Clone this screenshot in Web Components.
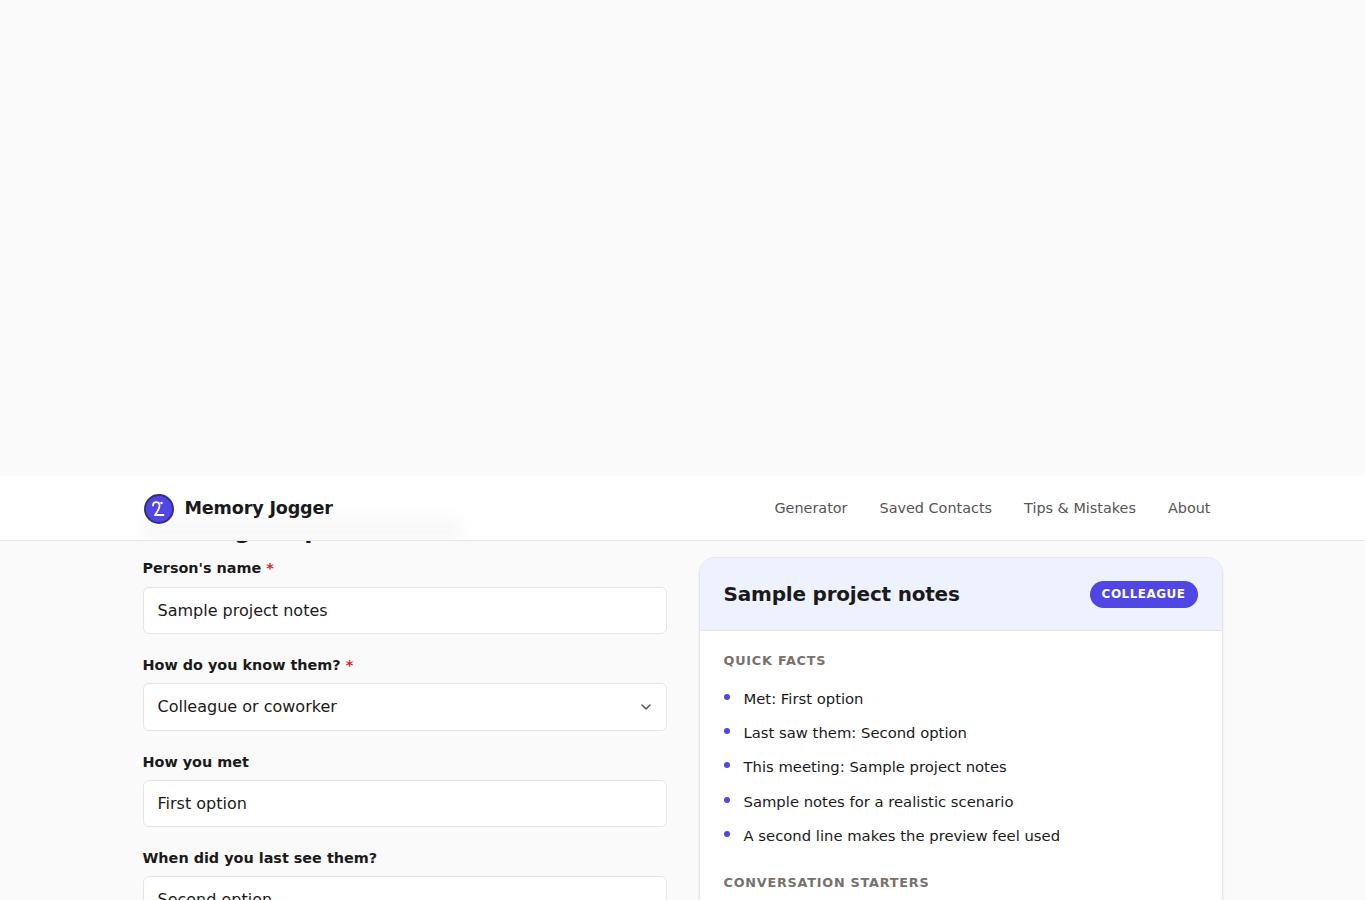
<!doctype html>
<html lang="en">
<head>
    <meta charset="utf-8">
    <title>Memory Jogger</title>
    <style>
        body {
            margin: 0;
            height: 900px;
            overflow: hidden;
            background: #fafafa;
            color: #1a1a1a;
            font-family: "DejaVu Sans", sans-serif;
            font-size: 16px;
            line-height: 1.6;
            --accent: #4f46e5;
            --line: #e5e5e5;
        }
    </style>
</head>
<body>
    <mj-header>
        <mj-link>Generator</mj-link>
        <mj-link>Saved Contacts</mj-link>
        <mj-link>Tips &amp; Mistakes</mj-link>
        <mj-link>About</mj-link>
    </mj-header>

    <mj-layout>
        <mj-form slot="form">
            <mj-field label="Person's name" required>Sample project notes</mj-field>
            <mj-field label="How do you know them?" required select>Colleague or coworker</mj-field>
            <mj-field label="How you met">First option</mj-field>
            <mj-field label="When did you last see them?">Second option</mj-field>
        </mj-form>
        <mj-card slot="card" name="Sample project notes" tag="Colleague">
            <mj-section heading="Quick facts">
                <mj-fact>Met: First option</mj-fact>
                <mj-fact>Last saw them: Second option</mj-fact>
                <mj-fact>This meeting: Sample project notes</mj-fact>
                <mj-fact>Sample notes for a realistic scenario</mj-fact>
                <mj-fact>A second line makes the preview feel used</mj-fact>
            </mj-section>
            <mj-section heading="Conversation starters"></mj-section>
        </mj-card>
    </mj-layout>

    <template id="header-tpl">
        <style>
            :host {
                display: block;
                position: relative;
                z-index: 1;
                box-sizing: border-box;
                height: 65px;
                margin-top: 476px;
                background: #fff;
                border-bottom: 1px solid var(--line);
                overflow: hidden;
            }
            .inner {
                display: flex;
                position: relative;
                align-items: center;
                justify-content: space-between;
                box-sizing: border-box;
                height: 64px;
                width: 1128px;
                margin: 0 auto;
                padding: 0 24px;
            }
            /* frosted trace of the heading scrolled under the bar */
            .inner::before {
                content: "";
                position: absolute;
                left: 24px;
                bottom: -6px;
                width: 318px;
                height: 28px;
                background: rgba(0, 0, 0, 0.028);
                filter: blur(8px);
            }
            .brand {
                display: flex;
                position: relative;
                align-items: center;
                gap: 10px;
                font-size: 17.6px;
                font-weight: 700;
                letter-spacing: -0.176px;
            }
            svg {
                display: block;
                margin-top: 1px;
            }
            nav {
                display: flex;
                gap: 8px;
                padding-top: 1px;
            }
        </style>
        <div class="inner">
            <div class="brand">
                <svg width="32" height="32" viewBox="0 0 32 32" fill="none">
                    <circle cx="16" cy="16" r="14" fill="#4f46e5" stroke="#312e81" stroke-width="2"/>
                    <path d="M10 12.500c0-2 1.300-3.300 3.200-3.300s3.300 1.500 3.300 3.500c0 3.500-2.500 6-4.500 9.300h8.500" stroke="#fff" stroke-width="1.800" stroke-linecap="round" stroke-linejoin="round"/>
                    <circle cx="18.500" cy="10" r="1.300" fill="#fff"/>
                </svg>
                <span>Memory Jogger</span>
            </div>
            <nav><slot></slot></nav>
        </div>
    </template>

    <template id="link-tpl">
        <style>
            :host {
                display: block;
                padding: 8px 12px;
                color: #555;
                font-size: 14.4px;
            }
        </style>
        <slot></slot>
    </template>

    <template id="layout-tpl">
        <style>
            :host {
                display: grid;
                grid-template-columns: 524px 524px;
                gap: 32px;
                width: 1080px;
                margin: 0 auto;
            }
        </style>
        <slot name="form"></slot>
        <slot name="card"></slot>
    </template>

    <template id="form-tpl">
        <style>
            :host {
                display: block;
                margin-top: -25px;
            }
            h2 {
                margin: 0 0 12.970px;
                font-size: 24px;
                line-height: 28.5px;
                letter-spacing: -0.24px;
            }
        </style>
        <h2>Meeting Prep Generator</h2>
        <slot></slot>
    </template>

    <template id="field-tpl">
        <style>
            :host {
                display: block;
                margin-bottom: 19.840px;
            }
            .label {
                display: block;
                margin-bottom: 6.260px;
                font-size: 14.4px;
                line-height: 23.04px;
                font-weight: 600;
            }
            .star {
                color: #dc2626;
            }
            .box {
                display: flex;
                align-items: center;
                justify-content: space-between;
                box-sizing: border-box;
                height: 47.4px;
                padding: 0 14px;
                background: #fff;
                border: 1px solid var(--line);
                border-radius: 6px;
            }
            svg {
                display: none;
            }
            :host([select]) svg {
                display: block;
            }
        </style>
        <span class="label"></span>
        <div class="box">
            <slot></slot>
            <svg width="12" height="12" viewBox="0 0 12 12" fill="none">
                <path d="M2 4l4 4 4-4" stroke="#525252" stroke-width="1.500" stroke-linecap="round" stroke-linejoin="round"/>
            </svg>
        </div>
    </template>

    <template id="card-tpl">
        <style>
            :host {
                display: block;
                box-sizing: border-box;
                height: 420px;
                margin-top: 16px;
                background: #fff;
                border: 1px solid var(--line);
                border-radius: 16px;
                overflow: hidden;
                box-shadow: 0 1px 3px rgba(0, 0, 0, 0.06);
            }
            header {
                display: flex;
                align-items: center;
                justify-content: space-between;
                box-sizing: border-box;
                height: 73px;
                padding: 0 24px;
                background: #eef2ff;
                border-bottom: 1px solid var(--line);
            }
            h3 {
                margin: 0;
                font-size: 20px;
                letter-spacing: -0.2px;
            }
            .tag {
                margin-top: 0.8px;
                padding: 4px 12px;
                border-radius: 999px;
                background: var(--accent);
                color: #fff;
                font-size: 12px;
                line-height: 19.2px;
                font-weight: 600;
                letter-spacing: 0.48px;
                text-transform: uppercase;
            }
            .body {
                padding: 20px 24px;
            }
        </style>
        <header>
            <h3></h3>
            <span class="tag"></span>
        </header>
        <div class="body"><slot></slot></div>
    </template>

    <template id="section-tpl">
        <style>
            :host {
                display: block;
                margin-bottom: 19.6px;
            }
            h4 {
                margin: 0 0 10.4px;
                color: #78716c;
                font-size: 12.8px;
                line-height: 20.5px;
                letter-spacing: 0.768px;
                text-transform: uppercase;
            }
        </style>
        <h4></h4>
        <slot></slot>
    </template>

    <template id="fact-tpl">
        <style>
            :host {
                display: flex;
                gap: 14px;
                padding: 5px 0;
                font-size: 14.8px;
                line-height: 24.3px;
            }
            i {
                flex: none;
                width: 6px;
                height: 6px;
                margin-top: 7px;
                border-radius: 50%;
                background: var(--accent);
            }
        </style>
        <i></i>
        <span><slot></slot></span>
    </template>

<script>
    class MjElement extends HTMLElement {
        constructor() {
            super();
            const name = this.localName.replace('mj-', '');
            const template = document.querySelector(`#${name}-tpl`);

            this.attachShadow({ mode: 'open' });
            this.shadowRoot.appendChild(template.content.cloneNode(true));
        }

        fill(selector, text) {
            this.shadowRoot.querySelector(selector).textContent = text;
        }
    }

    customElements.define('mj-header', class extends MjElement {});
    customElements.define('mj-link', class extends MjElement {});
    customElements.define('mj-layout', class extends MjElement {});
    customElements.define('mj-form', class extends MjElement {});
    customElements.define('mj-fact', class extends MjElement {});

    customElements.define('mj-field', class extends MjElement {
        connectedCallback() {
            this.fill('.label', this.getAttribute('label'));
            if (this.hasAttribute('required')) {
                const star = document.createElement('span');
                star.className = 'star';
                star.textContent = ' *';
                this.shadowRoot.querySelector('.label').append(star);
            }
        }
    });

    customElements.define('mj-card', class extends MjElement {
        connectedCallback() {
            this.fill('h3', this.getAttribute('name'));
            this.fill('.tag', this.getAttribute('tag'));
        }
    });

    customElements.define('mj-section', class extends MjElement {
        connectedCallback() {
            this.fill('h4', this.getAttribute('heading'));
        }
    });
</script>
</body>
</html>
